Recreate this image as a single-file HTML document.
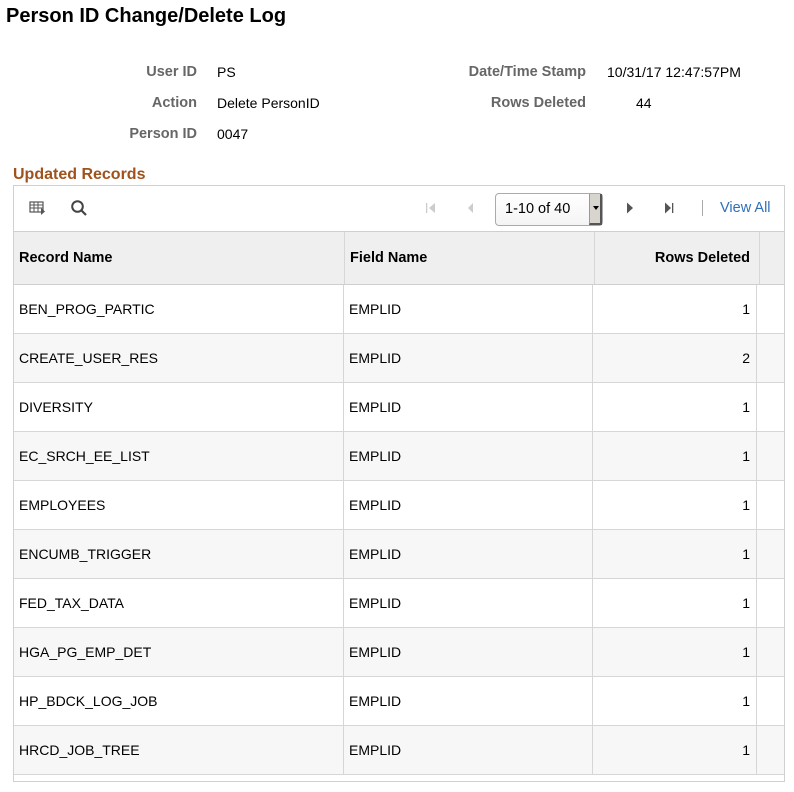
<!DOCTYPE html>
<html><head><style>
*{margin:0;padding:0;box-sizing:border-box}
body{width:794px;height:792px;background:#fff;font-family:"Liberation Sans",Arial,sans-serif;color:#000;position:relative;overflow:hidden}
.a{position:absolute;white-space:nowrap}
h1{position:absolute;left:6px;top:5px;font-size:20px;font-weight:bold;color:#000}
.lbl{font-size:14.5px;font-weight:bold;color:#666;text-align:right}
.val{font-size:14px;color:#000}
.sec{left:13px;top:166px;font-size:16px;font-weight:bold;color:#a0521c}
.box{position:absolute;left:13px;top:185px;width:772px;height:597px;border:1px solid #d0d0d0}
.tb{position:absolute;left:0;top:0;width:770px;height:46px;border-bottom:1px solid #cfcfcf}
.hdr{position:absolute;left:0;top:46px;width:770px;height:53px;background:#efefef;border-bottom:1px solid #cfcfcf;font-size:14.5px;font-weight:bold}
.hdr div{position:absolute;top:0;height:52px;line-height:52px;border-right:1px solid #d6d6d6}
.row{position:absolute;left:0;width:770px;height:49px;border-bottom:1px solid #d6d6d6;font-size:14px}
.row div{position:absolute;top:0;height:48px;line-height:48px;border-right:1px solid #d6d6d6}
.alt{background:#f7f7f7}
</style></head><body>
<h1>Person ID Change/Delete Log</h1>
<div class="a lbl" style="right:597px;top:64px">User ID</div>
<div class="a val" style="left:217px;top:64px">PS</div>
<div class="a lbl" style="right:597px;top:95px">Action</div>
<div class="a val" style="left:217px;top:95px">Delete PersonID</div>
<div class="a lbl" style="right:597px;top:126px">Person ID</div>
<div class="a val" style="left:217px;top:126px">0047</div>
<div class="a lbl" style="right:208px;top:64px">Date/Time Stamp</div>
<div class="a val" style="left:607px;top:64px">10/31/17 12:47:57PM</div>
<div class="a lbl" style="right:208px;top:95px">Rows Deleted</div>
<div class="a val" style="left:636px;top:95px">44</div>
<div class="a sec">Updated Records</div>
<div class="box">
 <div class="tb">
  <svg class="a" style="left:15px;top:14px" width="18" height="16" viewBox="0 0 18 16"><rect x="1" y="2" width="13" height="10" fill="none" stroke="#555" stroke-width="1.2"/><path d="M1 5H14M1 8H14M5 2V12M9 2V12" stroke="#555" stroke-width="1"/><path d="M12 8l4 3.5-4 3.5z" fill="#555"/></svg>
  <svg class="a" style="left:56px;top:13px" width="18" height="18" viewBox="0 0 18 18"><circle cx="7.5" cy="7.5" r="5.3" fill="none" stroke="#444" stroke-width="2"/><path d="M11.5 11.5L16 16" stroke="#444" stroke-width="2.2"/></svg>
  <svg class="a" style="left:410px;top:15px" width="14" height="14" viewBox="0 0 14 14"><rect x="2" y="2" width="1.3" height="10" fill="#ccc"/><path d="M11 2L5 7l6 5z" fill="#ccc"/></svg>
  <svg class="a" style="left:450px;top:15px" width="14" height="14" viewBox="0 0 14 14"><path d="M9 2L4 7l5 5z" fill="#ccc"/></svg>
  <div class="a" style="left:481px;top:7px;width:108px;height:33px;border:1px solid #aaa;border-radius:4px;background:linear-gradient(#fff,#f4f4f4);font-size:14.5px;line-height:31px;padding-left:9px">1-10 of 40
   <div class="a" style="right:0;top:0;width:13px;height:31px;background:#d8d4ce;border-left:1px solid #999;border-right:2px solid #555;border-bottom:2px solid #555"><div class="a" style="left:3px;top:12px;width:0;height:0;border-left:3px solid transparent;border-right:3px solid transparent;border-top:4px solid #000"></div></div>
  </div>
  <svg class="a" style="left:609px;top:15px" width="14" height="14" viewBox="0 0 14 14"><path d="M4 1.5l6 5.5-6 5.5z" fill="#555"/></svg>
  <svg class="a" style="left:648px;top:15px" width="14" height="14" viewBox="0 0 14 14"><path d="M3 1.5l6 5.5-6 5.5z" fill="#555"/><rect x="10" y="2" width="1.3" height="10" fill="#555"/></svg>
  <div class="a" style="left:688px;top:14px;width:1px;height:16px;background:#aaa"></div>
  <div class="a" style="left:706px;top:14px;font-size:14.5px;color:#2f6fba">View All</div>
 </div>
 <div class="hdr">
  <div style="left:0;width:331px;padding-left:5px">Record Name</div>
  <div style="left:331px;width:250px;padding-left:5px">Field Name</div>
  <div style="left:581px;width:165px;text-align:right;padding-right:9px">Rows Deleted</div>
 </div>
 <div id="rows"></div>
</div>
<script>
var d=[["BEN_PROG_PARTIC",1],["CREATE_USER_RES",2],["DIVERSITY",1],["EC_SRCH_EE_LIST",1],["EMPLOYEES",1],["ENCUMB_TRIGGER",1],["FED_TAX_DATA",1],["HGA_PG_EMP_DET",1],["HP_BDCK_LOG_JOB",1],["HRCD_JOB_TREE",1]];
var h="";d.forEach(function(r,i){h+='<div class="row'+(i%2?' alt':'')+'" style="top:'+(99+i*49)+'px"><div style="left:0;width:330px;padding-left:5px">'+r[0]+'</div><div style="left:330px;width:249px;padding-left:5px">EMPLID</div><div style="left:579px;width:164px;text-align:right;padding-right:6px">'+r[1]+'</div></div>';});
document.getElementById("rows").outerHTML=h;
</script>
</body></html>
